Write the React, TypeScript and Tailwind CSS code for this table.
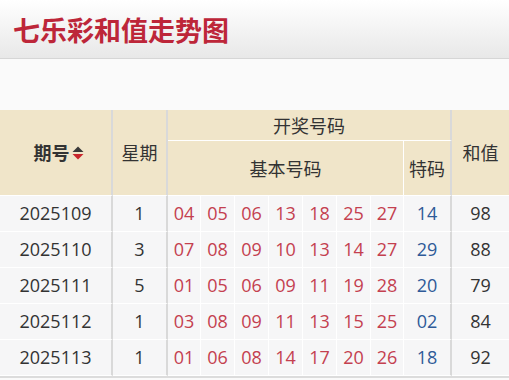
import React from 'react'

// --- Data ---

interface Draw {
  issue: string
  week: number
  base: string[]
  special: string
  sum: number
}

const DRAWS: Draw[] = [
  { issue: '2025109', week: 1, base: ['04', '05', '06', '13', '18', '25', '27'], special: '14', sum: 98 },
  { issue: '2025110', week: 3, base: ['07', '08', '09', '10', '13', '14', '27'], special: '29', sum: 88 },
  { issue: '2025111', week: 5, base: ['01', '05', '06', '09', '11', '19', '28'], special: '20', sum: 79 },
  { issue: '2025112', week: 1, base: ['03', '08', '09', '11', '13', '15', '25'], special: '02', sum: 84 },
  { issue: '2025113', week: 1, base: ['01', '06', '08', '14', '17', '20', '26'], special: '18', sum: 92 },
]

const FONT = { fontFamily: '"Segoe UI", "Open Sans", "Noto Sans CJK SC", sans-serif' }
const CJK = { fontFamily: '"Noto Sans CJK SC", "Noto Sans", sans-serif' }

// --- Sort icon ---

function SortIcon() {
  return (
    <svg width="12" height="14" viewBox="0 0 12 14" className="ml-[2px]">
      <polygon points="6,0.5 11.5,6 0.5,6" fill="#3a3a3a" />
      <polygon points="0.5,8 11.5,8 6,13.5" fill="#c8262c" />
    </svg>
  )
}

// --- Component ---

export default function App() {
  const head = 'bg-[#f0e5c9] text-[#333] text-[18px] border-b border-r border-white'
  const major = 'border-r-2 border-r-[#d9d9d9]'
  const cell = 'h-[36px] text-center text-[18px] border-b border-r border-white p-0'

  return (
    <div className="w-[509px] h-[380px] bg-[#fafafa] overflow-hidden" style={FONT}>
      {/* Header */}
      <div className="h-[59px] flex items-center pl-[13px] bg-gradient-to-b from-white to-[#e8e8e8] border-b border-[#d6d6d6]">
        <h1 className="text-[27px] font-bold text-[#bd2639] leading-none" style={CJK}>
          七乐彩和值走势图
        </h1>
      </div>

      <div className="h-[51px]" />

      {/* Table */}
      <table className="w-[509px] table-fixed border-separate border-spacing-0 border-b-2 border-[#dcdcdc]">
        <colgroup>
          <col className="w-[113px]" />
          <col className="w-[55px]" />
          <col className="w-[33px]" />
          <col className="w-[34px]" />
          <col className="w-[34px]" />
          <col className="w-[34px]" />
          <col className="w-[34px]" />
          <col className="w-[34px]" />
          <col className="w-[33px]" />
          <col className="w-[48px]" />
          <col className="w-[57px]" />
        </colgroup>
        <thead style={CJK}>
          <tr className="h-[31px]">
            <th rowSpan={2} className={`${head} ${major} font-bold`}>
              <span className="inline-flex items-center pl-[6px]">
                期号
                <SortIcon />
              </span>
            </th>
            <th rowSpan={2} className={`${head} ${major} font-normal`}>星期</th>
            <th colSpan={8} className={`${head} ${major} font-normal`}>开奖号码</th>
            <th rowSpan={2} className={`${head} border-r-0 font-normal`}>和值</th>
          </tr>
          <tr className="h-[55px]">
            <th colSpan={7} className={`${head} font-normal`}>基本号码</th>
            <th className={`${head} ${major} font-normal`}>特码</th>
          </tr>
        </thead>
        <tbody className="bg-[#f6f6f7]">
          {DRAWS.map((d) => (
            <tr key={d.issue}>
              <td className={`${cell} ${major} text-[#333]`}>{d.issue}</td>
              <td className={`${cell} ${major} text-[#333]`}>{d.week}</td>
              {d.base.map((n, i) => (
                <td key={i} className={`${cell} text-[#c4404f]`}>
                  {n}
                </td>
              ))}
              <td className={`${cell} ${major} text-[#2e5a98]`}>{d.special}</td>
              <td className={`${cell} border-r-0 text-[#333]`}>{d.sum}</td>
            </tr>
          ))}
        </tbody>
      </table>
    </div>
  )
}
